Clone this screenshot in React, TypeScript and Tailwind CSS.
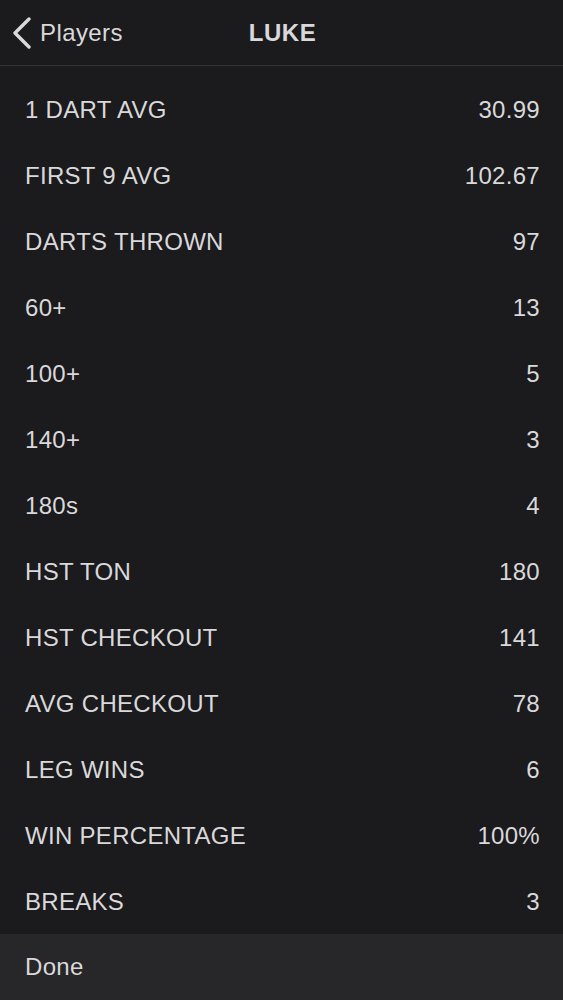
import React from 'react';

const stats: [string, string][] = [
  ['1 DART AVG', '30.99'],
  ['FIRST 9 AVG', '102.67'],
  ['DARTS THROWN', '97'],
  ['60+', '13'],
  ['100+', '5'],
  ['140+', '3'],
  ['180s', '4'],
  ['HST TON', '180'],
  ['HST CHECKOUT', '141'],
  ['AVG CHECKOUT', '78'],
  ['LEG WINS', '6'],
  ['WIN PERCENTAGE', '100%'],
  ['BREAKS', '3'],
];

export default function App() {
  return (
    <div
      className="w-[563px] h-[1000px] bg-[#1b1a1d] text-[#d9d8db] flex flex-col overflow-hidden"
      style={{ fontFamily: '"Liberation Sans", Arial, sans-serif' }}
    >
      {/* Header */}
      <div className="relative h-[66px] flex items-center justify-center border-b border-[#323135] shrink-0">
        <button className="absolute left-[12px] top-0 h-full flex items-center gap-[8px] text-[24px] tracking-[0.4px] text-[#d9d8db]">
          <svg width="20" height="32" viewBox="0 0 20 32" fill="none">
            <path d="M17 2 L3 16 L17 30" stroke="#d9d8db" strokeWidth="3.4" strokeLinecap="round" strokeLinejoin="round" />
          </svg>
          <span>Players</span>
        </button>
        <h1 className="text-[24px] font-bold tracking-[0.5px] ml-[2px]">LUKE</h1>
      </div>

      {/* Stats */}
      <div className="flex-1 flex flex-col pt-[9px]">
        {stats.map(([label, value]) => (
          <div
            key={label}
            className="h-[66px] flex items-center justify-between pl-[25px] pr-[23px] pt-[3px] text-[24px] tracking-[0.3px]"
          >
            <span>{label}</span>
            <span>{value}</span>
          </div>
        ))}
      </div>

      {/* Done */}
      <div className="h-[66px] shrink-0 bg-[#272629] flex items-center pl-[25px] text-[24px] tracking-[0.3px]">
        Done
      </div>
    </div>
  );
}
